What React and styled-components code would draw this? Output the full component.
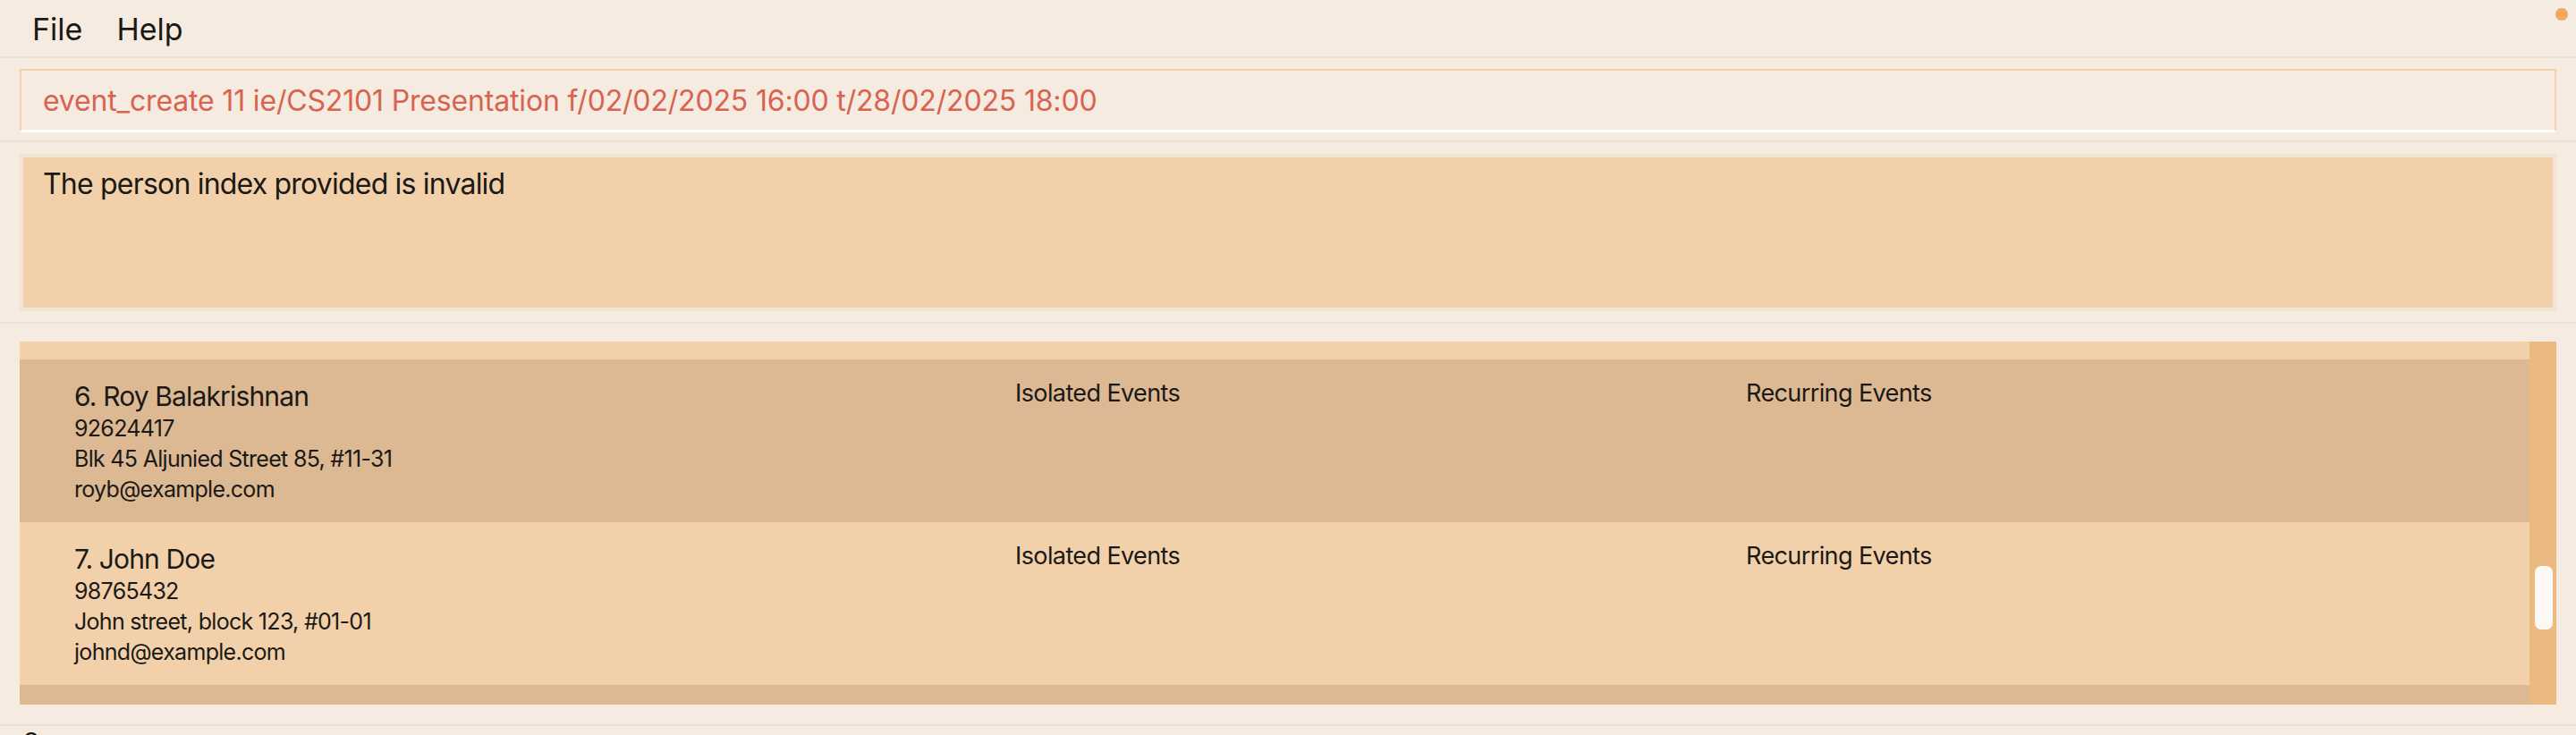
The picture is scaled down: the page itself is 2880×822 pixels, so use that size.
import React, { useLayoutEffect, useRef } from "react";
import styled, { createGlobalStyle } from "styled-components";

const COLORS = {
  page: "#f5ebe1",
  paneLine: "#efe1d1",
  field: "#f3d0a8",
  command: "#d8634f",
  result: "#f2d0aa",
  resultFrame: "#f3e3d2",
  rowLight: "#f2d0aa",
  rowDark: "#dcb893",
  track: "#ebba80",
  thumb: "#fcf8f3",
  dot: "#f2a95a",
  text: "#1b1915",
};

const ROW_HEIGHT = 182;

const persons = [
  { name: "Alex Yeoh", phone: "87438807", address: "Blk 30 Geylang Street 29, #06-40", email: "alexyeoh@example.com" },
  { name: "Bernice Yu", phone: "99272758", address: "Blk 30 Lorong 3 Serangoon Gardens, #07-18", email: "berniceyu@example.com" },
  { name: "Charlotte Oliveiro", phone: "93210283", address: "Blk 11 Ang Mo Kio Street 74, #11-04", email: "charlotte@example.com" },
  { name: "David Li", phone: "91031282", address: "Blk 436 Serangoon Gardens Street 26, #16-43", email: "lidavid@example.com" },
  { name: "Irfan Ibrahim", phone: "92492021", address: "Blk 47 Tampines Street 20, #17-35", email: "irfan@example.com" },
  { name: "Roy Balakrishnan", phone: "92624417", address: "Blk 45 Aljunied Street 85, #11-31", email: "royb@example.com" },
  { name: "John Doe", phone: "98765432", address: "John street, block 123, #01-01", email: "johnd@example.com" },
  { name: "Jane Tan", phone: "91234567", address: "Jane avenue, block 45, #02-02", email: "janet@example.com" },
];

const GlobalStyle = createGlobalStyle`
  html, body {
    margin: 0;
    padding: 0;
    background: ${COLORS.page};
    overflow: hidden;
  }
  body {
    font-family: Inter, "Noto Sans", sans-serif;
    color: ${COLORS.text};
  }
`;

const Window = styled.div`
  display: flex;
  flex-direction: column;
  height: 822px;
  overflow: hidden;
  background: ${COLORS.page};
`;

const MenuBar = styled.div`
  display: flex;
  align-items: center;
  height: 63px;
  padding: 2px 9px 0 17px;
  box-sizing: border-box;
  flex-shrink: 0;
`;

const MenuItem = styled.span`
  font-size: 34px;
  padding: 0 19px;
`;

const StatusDot = styled.span`
  width: 14px;
  height: 14px;
  border-radius: 50%;
  background: ${COLORS.dot};
  margin-left: auto;
  align-self: flex-start;
  margin-top: 7px;
`;

const Pane = styled.div`
  border-top: 2px solid ${COLORS.paneLine};
  padding: ${(p) => p.$padding};
  flex-shrink: 0;
`;

const CommandField = styled.div`
  box-sizing: border-box;
  height: 71px;
  display: flex;
  align-items: center;
  padding-left: 24px;
  border: 2px solid ${COLORS.field};
  border-bottom: 3px solid #ffffff;
  font-size: 32px;
  letter-spacing: -0.17px;
  color: ${COLORS.command};
  white-space: nowrap;
`;

const ResultBox = styled.div`
  box-sizing: border-box;
  height: 176px;
  border: 4px solid ${COLORS.resultFrame};
  background: ${COLORS.result};
  padding: 11px 22px;
  font-size: 32px;
  letter-spacing: -0.8px;
  line-height: 1.21;
`;

const ListFrame = styled.div`
  display: flex;
  height: 406px;
`;

const Viewport = styled.div`
  flex: 1;
  overflow: hidden;
  background: ${COLORS.rowLight};
`;

const Row = styled.div`
  box-sizing: border-box;
  height: ${ROW_HEIGHT}px;
  display: grid;
  grid-template-columns: 1052px 817px 1fr;
  align-items: start;
  padding: 22px 0 0 61px;
  background: ${(p) => (p.$dark ? COLORS.rowDark : COLORS.rowLight)};
`;

const Details = styled.div`
  display: flex;
  flex-direction: column;
`;

const Name = styled.div`
  font-size: 30px;
  line-height: 38px;
  letter-spacing: -0.85px;
`;

const Field = styled.div`
  font-size: 25px;
  line-height: 34px;
  letter-spacing: -0.7px;
`;

const EventHeader = styled.div`
  font-size: 27px;
  line-height: 31px;
  letter-spacing: -0.6px;
`;

const Track = styled.div`
  width: 30px;
  box-sizing: border-box;
  padding: 0 4px 0 6px;
  background: ${COLORS.track};
`;

const Thumb = styled.div`
  height: 71px;
  border-radius: 7px;
  background: ${COLORS.thumb};
`;

const StatusBar = styled.div`
  border-top: 2px solid ${COLORS.paneLine};
  padding: 4px 26px 0;
  font-size: 27px;
  line-height: 27px;
  flex-shrink: 0;
`;

const PersonCard = ({ index, person }) => (
  <Row $dark={index % 2 === 0}>
    <Details>
      <Name>
        {index}. {person.name}
      </Name>
      <Field>{person.phone}</Field>
      <Field>{person.address}</Field>
      <Field>{person.email}</Field>
    </Details>
    <EventHeader>Isolated Events</EventHeader>
    <EventHeader>Recurring Events</EventHeader>
  </Row>
);

const PersonList = () => {
  const viewportRef = useRef(null);

  useLayoutEffect(() => {
    if (viewportRef.current) {
      viewportRef.current.scrollTop = ROW_HEIGHT * 5 - 20;
    }
  }, []);

  return (
    <ListFrame>
      <Viewport ref={viewportRef}>
        {persons.map((person, i) => (
          <PersonCard key={person.email} index={i + 1} person={person} />
        ))}
      </Viewport>
      <Track>
        <Thumb style={{ marginTop: 251 }} />
      </Track>
    </ListFrame>
  );
};

const App = () => (
  <>
    <GlobalStyle />
    <Window>
      <MenuBar>
        <MenuItem>File</MenuItem>
        <MenuItem>Help</MenuItem>
        <StatusDot />
      </MenuBar>
      <Pane $padding="12px 22px 9px">
        <CommandField>
          event_create 11 ie/CS2101 Presentation f/02/02/2025 16:00 t/28/02/2025 18:00
        </CommandField>
      </Pane>
      <Pane $padding="13px 22px 12px">
        <ResultBox>The person index provided is invalid</ResultBox>
      </Pane>
      <Pane $padding="20px 22px 22px">
        <PersonList />
      </Pane>
      <StatusBar>Summary</StatusBar>
    </Window>
  </>
);

export default App;
